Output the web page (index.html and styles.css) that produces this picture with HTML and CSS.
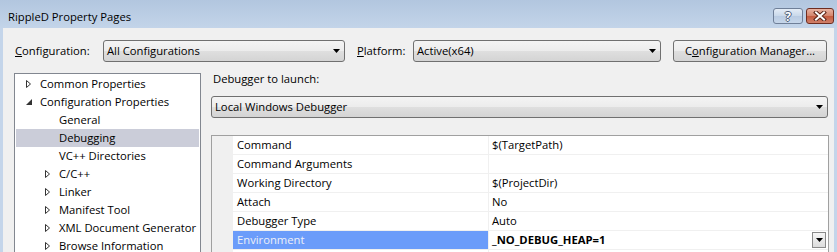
FILE: index.html
```html
<!DOCTYPE html>
<html lang="en">
<head>
    <meta charset="UTF-8">
    <title>RippleD Property Pages</title>
    <link rel="stylesheet" href="styles.css">
</head>
<body>
    <div class="window">
        <div class="titlebar">
            <span class="title">RippleD Property Pages</span>
            <div class="caption-buttons">
                <span class="cap-btn cap-help">?</span>
                <span class="cap-btn cap-close">
                    <svg width="14" height="10" viewBox="0 0 14 10">
                        <path d="M3 1.5 L11 8.5 M11 1.5 L3 8.5" stroke="#5a2418" stroke-width="4" stroke-linecap="square"/>
                        <path d="M3 1.5 L11 8.5 M11 1.5 L3 8.5" stroke="#fff" stroke-width="2" stroke-linecap="square"/>
                    </svg>
                </span>
            </div>
        </div>

        <div class="client">
            <div class="toolbar">
                <label class="lbl lbl-config"><u>C</u>onfiguration:</label>
                <div class="combo combo-config">
                    <span class="combo-text">All Configurations</span>
                    <svg class="combo-arrow" width="7" height="4" viewBox="0 0 7 4"><polygon points="0,0 7,0 3.5,4" fill="#000"/></svg>
                </div>
                <label class="lbl lbl-platform"><u>P</u>latform:</label>
                <div class="combo combo-platform">
                    <span class="combo-text">Active(x64)</span>
                    <svg class="combo-arrow" width="7" height="4" viewBox="0 0 7 4"><polygon points="0,0 7,0 3.5,4" fill="#000"/></svg>
                </div>
                <button class="btn">C<u>o</u>nfiguration Manager...</button>
            </div>

            <div class="main">
                <ul class="tree">
                    <li class="node"><span class="twisty"><svg width="5" height="8" viewBox="0 0 5 8"><polygon points="0.5,0.5 4.5,4 0.5,7.5" fill="none" stroke="#333" stroke-width="1"/></svg></span>Common Properties</li>
                    <li class="node"><span class="twisty"><svg width="6" height="6" viewBox="0 0 6 6"><polygon points="6,0 6,6 0,6" fill="#333"/></svg></span>Configuration Properties</li>
                    <li class="node child">General</li>
                    <li class="node child selected">Debugging</li>
                    <li class="node child">VC++ Directories</li>
                    <li class="node child-exp"><span class="twisty"><svg width="5" height="8" viewBox="0 0 5 8"><polygon points="0.5,0.5 4.5,4 0.5,7.5" fill="none" stroke="#333" stroke-width="1"/></svg></span>C/C++</li>
                    <li class="node child-exp"><span class="twisty"><svg width="5" height="8" viewBox="0 0 5 8"><polygon points="0.5,0.5 4.5,4 0.5,7.5" fill="none" stroke="#333" stroke-width="1"/></svg></span>Linker</li>
                    <li class="node child-exp"><span class="twisty"><svg width="5" height="8" viewBox="0 0 5 8"><polygon points="0.5,0.5 4.5,4 0.5,7.5" fill="none" stroke="#333" stroke-width="1"/></svg></span>Manifest Tool</li>
                    <li class="node child-exp"><span class="twisty"><svg width="5" height="8" viewBox="0 0 5 8"><polygon points="0.5,0.5 4.5,4 0.5,7.5" fill="none" stroke="#333" stroke-width="1"/></svg></span>XML Document Generator</li>
                    <li class="node child-exp"><span class="twisty"><svg width="5" height="8" viewBox="0 0 5 8"><polygon points="0.5,0.5 4.5,4 0.5,7.5" fill="none" stroke="#333" stroke-width="1"/></svg></span>Browse Information</li>
                </ul>

                <div class="page">
                    <div class="page-label">Debugger to launch:</div>
                    <div class="combo combo-debugger">
                        <span class="combo-text">Local Windows Debugger</span>
                        <svg class="combo-arrow" width="7" height="4" viewBox="0 0 7 4"><polygon points="0,0 7,0 3.5,4" fill="#000"/></svg>
                    </div>

                    <div class="grid">
                        <div class="row">
                            <span class="gutter"></span><span class="name">Command</span><span class="value">$(TargetPath)</span>
                        </div>
                        <div class="row">
                            <span class="gutter"></span><span class="name">Command Arguments</span><span class="value"></span>
                        </div>
                        <div class="row">
                            <span class="gutter"></span><span class="name">Working Directory</span><span class="value">$(ProjectDir)</span>
                        </div>
                        <div class="row">
                            <span class="gutter"></span><span class="name">Attach</span><span class="value">No</span>
                        </div>
                        <div class="row">
                            <span class="gutter"></span><span class="name">Debugger Type</span><span class="value">Auto</span>
                        </div>
                        <div class="row active">
                            <span class="gutter"></span><span class="name">Environment</span>
                            <span class="value"><b>_NO_DEBUG_HEAP=1</b>
                                <span class="drop-btn"><svg width="7" height="4" viewBox="0 0 7 4"><polygon points="0,0 7,0 3.5,4" fill="#000"/></svg></span>
                            </span>
                        </div>
                        <div class="row">
                            <span class="gutter"></span><span class="name"></span><span class="value"></span>
                        </div>
                    </div>
                </div>
            </div>
        </div>
    </div>
</body>
</html>
```

FILE: styles.css
```css
body {
    margin: 0;
    overflow: hidden;
    font-family: 'Open Sans', 'Noto Sans', sans-serif;
    font-size: 11.25px;
    color: #000;
}
.window {
    width: 837px;
    height: 252px;
    overflow: hidden;
    background: #c4d5ea;
    display: flex;
    flex-direction: column;
}
.titlebar {
    height: 28px;
    flex: none;
    display: flex;
    align-items: flex-start;
    background: linear-gradient(#b2c6df, #c3d4e9);
}
.title {
    padding: 9px 0 0 8px;
    line-height: 16px;
}
.caption-buttons {
    margin-left: auto;
    margin-top: 8px;
    padding-right: 3px;
    display: flex;
    gap: 3px;
}
.cap-btn {
    height: 16px;
    box-sizing: border-box;
    border-radius: 3px;
    display: flex;
    align-items: center;
    justify-content: center;
}
.cap-help {
    width: 30px;
    border: 1px solid #6f7f98;
    background: linear-gradient(#e4ecf6, #c9d8ea 50%, #b9cbe2 50%, #c6d6ea);
    color: #fff;
    font-weight: bold;
    font-size: 12px;
    text-shadow: 1px 0 0 #4d5c75, -1px 0 0 #4d5c75, 0 1px 0 #4d5c75, 0 -1px 0 #4d5c75;
}
.cap-close {
    width: 28px;
    border: 1px solid #6e2d20;
    background: linear-gradient(#e8b3a2, #d3846c 50%, #c35a3e 50%, #d0806a);
}

.client {
    flex: 1;
    margin: 0 3px;
    background: #f0f0f0;
}
.toolbar {
    display: flex;
    align-items: center;
    padding: 12px 0 0 12px;
    height: 22px;
}
.lbl {
    line-height: 16px;
}
.lbl-config {
    width: 88px;
}
.lbl-platform {
    width: 56px;
    margin-left: 12px;
}
.combo {
    box-sizing: border-box;
    height: 22px;
    border: 1px solid #707070;
    border-radius: 3px;
    background: linear-gradient(#f4f4f4, #ececec 50%, #dfdfdf 50%, #d4d4d4);
    display: flex;
    align-items: center;
    line-height: 20px;
}
.combo-text {
    flex: 1;
    padding-left: 3px;
    white-space: nowrap;
}
.combo-arrow {
    margin-right: 4px;
}
.combo-config {
    width: 242px;
}
.combo-platform {
    width: 248px;
}
.btn {
    margin-left: 12px;
    width: 154px;
    height: 22px;
    padding: 0;
    border: 1px solid #707070;
    border-radius: 3px;
    background: linear-gradient(#f4f4f4, #ececec 50%, #dfdfdf 50%, #d4d4d4);
    font: inherit;
    color: #000;
    line-height: 20px;
}

.main {
    display: flex;
    margin-top: 9px;
    padding-left: 11px;
    gap: 10px;
}
.tree {
    list-style: none;
    margin: 2px 0 0;
    padding: 1px 0 0;
    width: 187px;
    height: 200px;
    box-sizing: border-box;
    border: 1px solid #828790;
    background: #fff;
}
.node {
    height: 18px;
    line-height: 18px;
    margin: 0 1px;
    padding-left: 10px;
    display: flex;
    align-items: center;
    white-space: nowrap;
}
.twisty {
    width: 14px;
    display: flex;
    align-items: center;
}
.node.child {
    padding-left: 43px;
}
.node.child-exp {
    padding-left: 29px;
}
.node.selected {
    background: #cbcdd9;
}

.page {
    width: 618px;
}
.page-label {
    line-height: 16px;
    padding-left: 2px;
}
.combo-debugger {
    margin-top: 9px;
    width: 617px;
}
.combo-debugger .combo-text {
    padding-left: 3px;
}
.grid {
    margin-top: 17px;
    border: 1px solid #a0a0a0;
    background: #fff;
    height: 200px;
}
.row {
    display: flex;
    height: 19px;
}
.gutter {
    width: 21px;
    flex: none;
    background: #f0f0f0;
}
.name {
    width: 251px;
    flex: none;
    padding-left: 4px;
    line-height: 18px;
    border-bottom: 1px solid #f0f0f0;
    border-right: 1px solid #f0f0f0;
    white-space: nowrap;
}
.value {
    flex: 1;
    padding-left: 3px;
    line-height: 18px;
    border-bottom: 1px solid #f0f0f0;
    display: flex;
    align-items: center;
    white-space: nowrap;
}
.row.active .name {
    background: #6b9cfa;
    color: #eef0f8;
}
.drop-btn {
    margin-left: auto;
    margin-right: 2px;
    width: 14px;
    height: 16px;
    box-sizing: border-box;
    border: 1px solid #8a8a8a;
    background: linear-gradient(#f6f6f6, #dcdcdc);
    display: flex;
    align-items: center;
    justify-content: center;
}
```
